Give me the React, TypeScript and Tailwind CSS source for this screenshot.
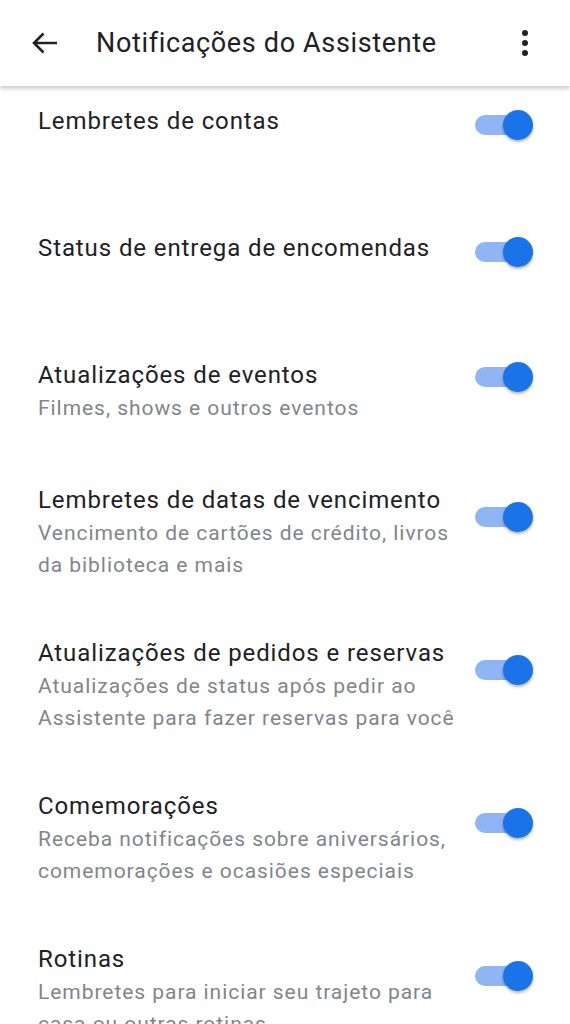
import React from 'react';

type Item = {
  title: string;
  lines: string[];
};

const items: Item[] = [
  { title: 'Lembretes de contas', lines: [] },
  { title: 'Status de entrega de encomendas', lines: [] },
  { title: 'Atualizações de eventos', lines: ['Filmes, shows e outros eventos'] },
  {
    title: 'Lembretes de datas de vencimento',
    lines: ['Vencimento de cartões de crédito, livros', 'da biblioteca e mais'],
  },
  {
    title: 'Atualizações de pedidos e reservas',
    lines: ['Atualizações de status após pedir ao', 'Assistente para fazer reservas para você'],
  },
  {
    title: 'Comemorações',
    lines: ['Receba notificações sobre aniversários,', 'comemorações e ocasiões especiais'],
  },
  {
    title: 'Rotinas',
    lines: ['Lembretes para iniciar seu trajeto para', 'casa ou outras rotinas'],
  },
];

const Toggle = ({ offset }: { offset: string }) => (
  <div className={`relative h-[30px] w-[58px] shrink-0 ${offset}`}>
    <div className="absolute left-0 top-[5px] h-[20px] w-[48px] rounded-full bg-[#8fb5f5]" />
    <div className="absolute right-0 top-0 h-[30px] w-[30px] rounded-full bg-[#1a73e8] shadow-[0_2px_3px_rgba(0,0,0,0.3)]" />
  </div>
);

const Row = ({ item }: { item: Item }) => {
  const n = item.lines.length;
  const height = n === 0 ? 'min-h-[127px]' : n === 1 ? 'pb-[59px]' : 'pb-[55px]';
  const offset = n === 0 ? 'mt-[6px]' : n === 1 ? 'mt-[4px]' : 'mt-[19px]';
  return (
    <div className={`flex items-start justify-between pl-[38px] pr-[37px] ${height}`}>
      <div className="flex min-w-0 flex-col">
        <p className="whitespace-nowrap text-[24px] leading-[34px] tracking-[0.9px] text-[#202124]">
          {item.title}
        </p>
        {item.lines.map((line) => (
          <p
            key={line}
            className="whitespace-nowrap text-[21px] leading-[32px] tracking-[0.95px] text-[#80868b]"
          >
            {line}
          </p>
        ))}
      </div>
      <Toggle offset={offset} />
    </div>
  );
};

export default function App() {
  return (
    <div className="h-[1024px] w-[570px] overflow-hidden bg-white font-['Roboto',sans-serif]">
      <header className="relative z-10 flex h-[86px] items-center bg-white shadow-[0_2px_5px_rgba(0,0,0,0.25)]">
        <button className="ml-[31px] flex h-[26px] w-[28px] items-center justify-center">
          <svg width="26" height="22" viewBox="0 0 26 22" fill="none">
            <path d="M25 11H2.5M11.5 1.5L2 11l9.5 9.5" stroke="#202124" strokeWidth="2.6" />
          </svg>
        </button>
        <h1 className="ml-[37px] flex-1 whitespace-nowrap text-[27px] tracking-[0.65px] text-[#202124]">
          Notificações do Assistente
        </h1>
        <div className="mr-[42px] flex flex-col items-center gap-[4px]">
          <span className="h-[6px] w-[6px] rounded-full bg-[#202124]" />
          <span className="h-[6px] w-[6px] rounded-full bg-[#202124]" />
          <span className="h-[6px] w-[6px] rounded-full bg-[#202124]" />
        </div>
      </header>
      <main className="pt-[18px]">
        {items.map((item) => (
          <Row key={item.title} item={item} />
        ))}
      </main>
    </div>
  );
}
